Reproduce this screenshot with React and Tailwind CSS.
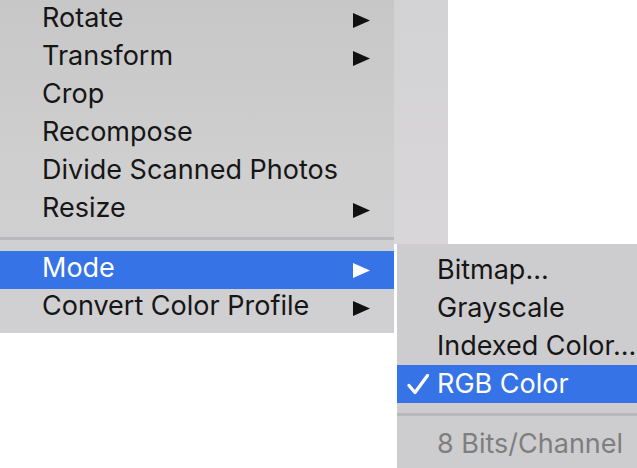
import React from "react";

const Tri = ({ white }) => (
  <svg width="17" height="15" viewBox="0 0 17 15" className="block">
    <path d="M0 0 L17 7.5 L0 15 Z" fill={white ? "#ffffff" : "#111111"} />
  </svg>
);

const Check = () => (
  <svg width="22" height="21" viewBox="0 0 22 21" className="block">
    <path d="M2 11.5 L8 18.5 L20.5 1.5" fill="none" stroke="#ffffff" strokeWidth="3.2" strokeLinecap="round" strokeLinejoin="round" />
  </svg>
);

const MainRow = ({ label, arrow, active }) => (
  <div
    className={
      "flex h-[38px] items-center pl-[42px] pr-[24px] " +
      (active ? "bg-[#3573e6] text-white" : "text-[#161616]")
    }
  >
    <span className="flex-1 pb-[5px] leading-none">{label}</span>
    {arrow ? <Tri white={active} /> : null}
  </div>
);

const SubRow = ({ label, checked, active, disabled }) => (
  <div
    className={
      "flex h-[38px] items-center " +
      (active ? "bg-[#3573e6] text-white" : disabled ? "text-[#7e7e7e]" : "text-[#161616]")
    }
  >
    <div className="flex w-[40px] shrink-0 items-center pl-[10px]">{checked ? <Check /> : null}</div>
    <span className="whitespace-nowrap pb-[2px] leading-none">{label}</span>
  </div>
);

export default function App() {
  return (
    <div
      className="relative h-[468px] w-[637px] overflow-hidden bg-white text-[27px]"
      style={{ fontFamily: "Inter, 'Liberation Sans', sans-serif" }}
    >
      <div className="flex items-start">
        <div className="w-[394px] bg-gradient-to-b from-[#c7c7c8] via-[#cfcfd0] to-[#d0cfd1] pt-[1px] pb-[6px]">
          <MainRow label="Rotate" arrow />
          <MainRow label="Transform" arrow />
          <MainRow label="Crop" />
          <MainRow label="Recompose" />
          <MainRow label="Divide Scanned Photos" />
          <MainRow label="Resize" arrow />
          <div className="pt-[8px] pb-[11px]">
            <div className="h-[3px] bg-[#b9b9bb]" />
          </div>
          <MainRow label="Mode" arrow active />
          <MainRow label="Convert Color Profile" arrow />
        </div>
        <div className="h-[244px] w-[54px] bg-gradient-to-b from-[#d3d2d4] to-[#d8d6d8]" />
      </div>

      <div className="absolute left-[397px] top-[244px] w-[260px] bg-[#cdcdcf] pt-[7px] pb-[10px]">
        <SubRow label="Bitmap..." />
        <SubRow label="Grayscale" />
        <SubRow label="Indexed Color..." />
        <SubRow label="RGB Color" checked active />
        <div className="pt-[10px] pb-[9px]">
          <div className="h-[3px] bg-[#b9b9bb]" />
        </div>
        <SubRow label="8 Bits/Channel" disabled />
      </div>
    </div>
  );
}
